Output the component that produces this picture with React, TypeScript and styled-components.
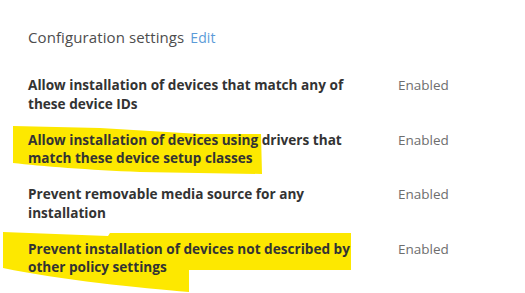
import React from "react";
import styled, { createGlobalStyle } from "styled-components";

const Global = createGlobalStyle`
  html, body { margin: 0; padding: 0; background: #ffffff; }
  body { width: 525px; height: 293px; overflow: hidden; }
`;

const Page = styled.div`
  position: relative;
  width: 525px;
  height: 293px;
  box-sizing: border-box;
  padding: 28px 0 0 28px;
  font-family: "Open Sans", "Noto Sans", sans-serif;
  background: #fff;
`;

const Marks = styled.svg`
  position: absolute;
  left: 0;
  top: 0;
  width: 525px;
  height: 293px;
  z-index: 0;
`;

const Content = styled.div`
  position: relative;
  z-index: 1;
  display: flex;
  flex-direction: column;
  gap: 29px;
`;

const Header = styled.div`
  display: flex;
  align-items: baseline;
  gap: 6px;
  font-size: 15px;
  line-height: 18px;
  letter-spacing: 0.1px;
  color: #4d4d4d;
`;

const EditLink = styled.span`
  color: #5b9bd8;
  font-size: 14px;
`;

const List = styled.div`
  display: flex;
  flex-direction: column;
  gap: 17.5px;
`;

const Row = styled.div`
  display: grid;
  grid-template-columns: 370px auto;
  align-items: start;
`;

const Label = styled.div`
  font-weight: 700;
  font-size: 13.6px;
  line-height: 18.5px;
  color: #333333;
  white-space: nowrap;
`;

const Value = styled.div`
  font-size: 13.5px;
  line-height: 18px;
  color: #6e6e6e;
`;

const rows = [
  ["Allow installation of devices that match any of", "these device IDs"],
  ["Allow installation of devices using drivers that", "match these device setup classes"],
  ["Prevent removable media source for any", "installation"],
  ["Prevent installation of devices not described by", "other policy settings"],
];

export default function App() {
  return (
    <>
      <Global />
      <Page>
        <Marks viewBox="0 0 525 293">
          <path
            d="M13 126 L100 128 L200 134 L261 134 L262 174 L140 172 C90 170 40 166 13 163 Z"
            fill="#fde800"
          />
          <path
            d="M3 232 L108 236 L110 233 L351 233 L351 270 L189 270 L189 292 C140 288 60 280 3 268 Z"
            fill="#fde800"
          />
        </Marks>
        <Content>
          <Header>
            <span>Configuration settings</span>
            <EditLink>Edit</EditLink>
          </Header>
          <List>
            {rows.map((r, i) => (
              <Row key={i}>
                <Label>
                  {r[0]}
                  <br />
                  {r[1]}
                </Label>
                <Value>Enabled</Value>
              </Row>
            ))}
          </List>
        </Content>
      </Page>
    </>
  );
}
